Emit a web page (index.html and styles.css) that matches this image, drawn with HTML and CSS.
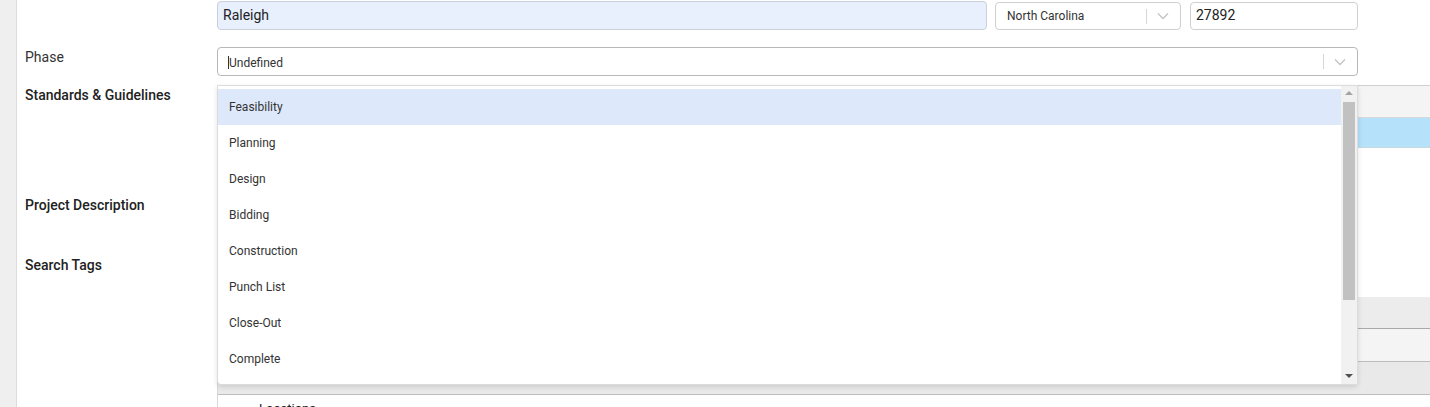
FILE: index.html
```html
<!DOCTYPE html>
<html lang="en">
<head>
  <meta charset="UTF-8">
  <title>Project Details</title>
  <link rel="stylesheet" href="styles.css">
</head>
<body>
  <div class="page">
    <div class="gutter"></div>
    <div class="content">
      <div class="form-row address-row">
        <div class="label"></div>
        <div class="field">
          <div class="address">
            <div class="input city">Raleigh</div>
            <div class="select state">
              <span class="value">North Carolina</span>
              <span class="sep"></span>
              <svg class="chevron" viewBox="0 0 12 8"><path d="M1 1.5 6 6.5 11 1.5"/></svg>
            </div>
            <div class="input zip">27892</div>
          </div>
        </div>
      </div>

      <div class="form-row phase-row">
        <div class="label">Phase</div>
        <div class="field">
          <div class="select phase">
            <span class="value"><span class="caret"></span>Undefined</span>
            <span class="sep"></span>
            <svg class="chevron" viewBox="0 0 12 8"><path d="M1 1.5 6 6.5 11 1.5"/></svg>
          </div>
          <div class="menu">
            <ul class="options">
              <li class="option active">Feasibility</li>
              <li class="option">Planning</li>
              <li class="option">Design</li>
              <li class="option">Bidding</li>
              <li class="option">Construction</li>
              <li class="option">Punch List</li>
              <li class="option">Close-Out</li>
              <li class="option">Complete</li>
            </ul>
            <div class="scrollbar">
              <span class="arrow up"></span>
              <span class="thumb"></span>
              <span class="arrow down"></span>
            </div>
          </div>
        </div>
      </div>

      <div class="form-row standards-row">
        <div class="label strong">Standards &amp; Guidelines</div>
        <div class="field">
          <div class="grid-panel">
            <div class="grid-head"></div>
            <div class="grid-row selected"></div>
            <div class="grid-row"></div>
          </div>
        </div>
      </div>

      <div class="form-row desc-row">
        <div class="label strong">Project Description</div>
        <div class="field"></div>
      </div>

      <div class="form-row tags-row">
        <div class="label strong">Search Tags</div>
        <div class="field"></div>
      </div>

      <div class="form-row tree-row">
        <div class="label"></div>
        <div class="field">
          <div class="tree-panel">
            <div class="tree-head"></div>
            <div class="tree-line"></div>
            <div class="tree-line"></div>
            <div class="tree-item"><span class="expander">&gt;</span>Locations</div>
          </div>
        </div>
      </div>
    </div>
  </div>
</body>
</html>
```

FILE: styles.css
```css
* {
  margin: 0;
  padding: 0;
  box-sizing: border-box;
}

body {
  font-family: Roboto, 'Liberation Sans', sans-serif;
  color: #333;
  background: #fff;
  overflow: hidden;
}

.page {
  display: flex;
  height: 407px;
}

.gutter {
  width: 17px;
  background: #efefef;
  border-right: 1px solid #dcdcdc;
  flex-shrink: 0;
}

.content {
  flex: 1;
  padding-left: 8px;
}

.form-row {
  display: grid;
  grid-template-columns: 192px 1213px;
}

.label {
  font-size: 14px;
  color: #333;
}

.label.strong {
  font-weight: 500;
  color: #222;
}

.field {
  position: relative;
}

/* address */
.address-row {
  padding-top: 1px;
}

.address {
  display: flex;
  width: 1141px;
}

.input,
.select {
  height: 29px;
  border: 1px solid #cfcfcf;
  border-radius: 4px;
  background: #fff;
}

.input {
  padding: 4px 5px;
  font-size: 14px;
  color: #222;
}

.input.city {
  width: 770px;
  background: #e8f0fe;
  border-color: #c9d0da;
  font-size: 14px;
  padding-top: 5px;
}

.input.zip {
  width: 168px;
  margin-left: 9px;
  margin-top: 1px;
  height: 28px;
  font-size: 14px;
}

.select {
  display: flex;
  align-items: center;
}

.select .value {
  flex: 1;
  font-size: 12px;
  color: #333;
}

.select .sep {
  width: 1px;
  height: 15px;
  background: #d6d6d6;
}

.chevron {
  width: 12px;
  height: 8px;
  margin: 0 11px 0 10px;
  fill: none;
  stroke: #c4c4c4;
  stroke-width: 1.4;
}

.select.state {
  width: 186px;
  margin-left: 8px;
  margin-top: 1px;
  height: 28px;
  padding-left: 11px;
}

/* phase */
.phase-row {
  margin-top: 17px;
}

.phase-row .label {
  padding-top: 2px;
}

.select.phase {
  width: 1141px;
  border-color: #b8b8b8;
  padding-left: 10px;
}

.select.phase .value {
  display: flex;
  align-items: center;
  padding-top: 2px;
}

.caret {
  display: inline-block;
  width: 1px;
  height: 13px;
  background: #333;
}

.menu {
  position: absolute;
  top: 38px;
  left: 0;
  width: 1141px;
  height: 300px;
  display: flex;
  background: #fff;
  border: 1px solid #dcdcdc;
  border-radius: 0 0 4px 4px;
  box-shadow: 0 2px 5px rgba(0, 0, 0, 0.12);
  z-index: 10;
}

.options {
  list-style: none;
  flex: 1;
  padding-top: 3px;
}

.option {
  height: 36px;
  line-height: 36px;
  padding-left: 11px;
  font-size: 12px;
  color: #333;
}

.option.active {
  background: #dde9fb;
}

.scrollbar {
  width: 16px;
  background: #f1f1f1;
  position: relative;
}

.thumb {
  position: absolute;
  left: 2px;
  top: 16px;
  width: 12px;
  height: 198px;
  background: #c1c1c1;
}

.arrow {
  position: absolute;
  left: 4px;
  width: 0;
  height: 0;
  border-left: 4px solid transparent;
  border-right: 4px solid transparent;
}

.arrow.up {
  top: 5px;
  border-bottom: 4px solid #a3a3a3;
}

.arrow.down {
  bottom: 6px;
  border-top: 4px solid #505050;
}

/* standards */
.standards-row {
  margin-top: 9px;
}

.standards-row .label {
  padding-top: 2px;
}

.grid-panel {
  border-top: 1px solid #d0d0d0;
  border-left: 1px solid #d8d8d8;
}

.grid-head {
  height: 32px;
  background: #f4f4f4;
  border-bottom: 1px solid #d8d8d8;
}

.grid-row {
  height: 30px;
}

.grid-row.selected {
  background: #b5e1fb;
  border-bottom: 1px solid #c8d8e0;
}

.desc-row {
  margin-top: 19px;
}

.tags-row {
  margin-top: 44px;
}

/* tree */
.tree-row {
  margin-top: 24px;
}

.tree-panel {
  border-left: 1px solid #d8d8d8;
}

.tree-head {
  height: 32px;
  background: #ececec;
  border-bottom: 1px solid #a9a9a9;
}

.tree-line {
  height: 33px;
  background: #f4f4f4;
  border-bottom: 1px solid #bdbdbd;
}

.tree-line + .tree-line {
  background: #e9e9e9;
}

.tree-item {
  height: 32px;
  padding-left: 18px;
  padding-top: 6px;
  font-size: 13px;
  color: #222;
}

.expander {
  display: inline-block;
  width: 23px;
  color: #aaa;
  font-size: 11px;
}
```
